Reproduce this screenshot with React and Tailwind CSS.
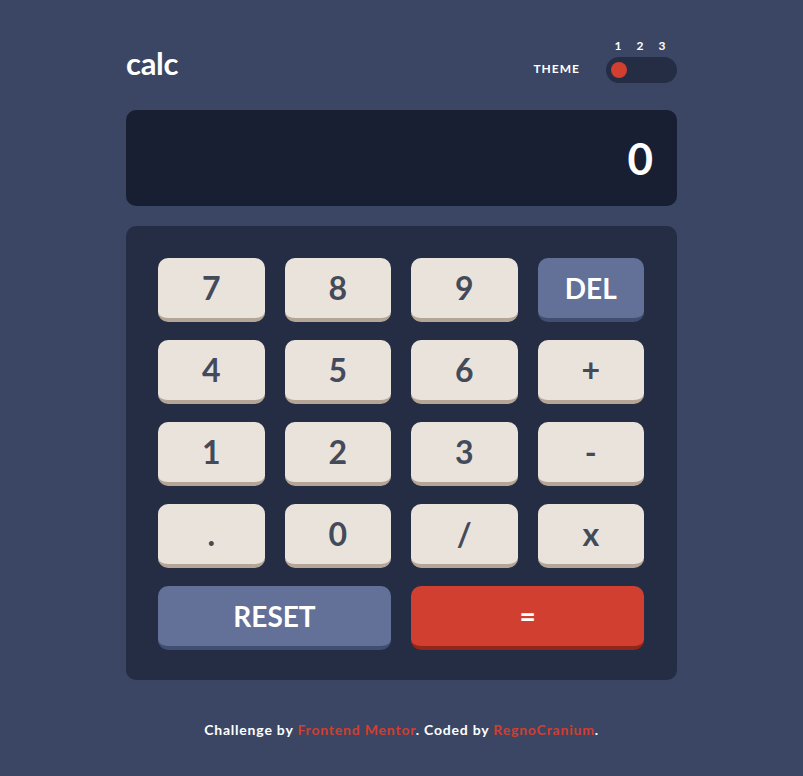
import React, { useState } from 'react';

const keys = [
  { label: '7' }, { label: '8' }, { label: '9' }, { label: 'DEL', kind: 'blue' },
  { label: '4' }, { label: '5' }, { label: '6' }, { label: '+' },
  { label: '1' }, { label: '2' }, { label: '3' }, { label: '-' },
  { label: '.' }, { label: '0' }, { label: '/' }, { label: 'x' },
];

const Key = ({ label, kind, wide, onClick }) => {
  let cls = 'bg-[#eae3dc] border-[#b4a597] text-[#434a59] text-[32px]';
  if (kind === 'blue') cls = 'bg-[#637097] border-[#404e72] text-white text-[28px]';
  if (kind === 'red') cls = 'bg-[#d03f2f] border-[#93261a] text-white text-[28px]';
  return (
    <button
      type="button"
      onClick={onClick}
      className={`${cls} ${wide ? 'col-span-2' : ''} h-[64px] rounded-[10px] border-b-4 flex items-center justify-center font-bold leading-none cursor-pointer`}
    >
      {label}
    </button>
  );
};

export default function App() {
  const [value] = useState('0');

  return (
    <div className="min-h-[776px] bg-[#3a4663] font-['Lato','Liberation_Sans',sans-serif] flex flex-col items-center pt-[38px]">
      <div className="w-[551px]">
        {/* header */}
        <header className="flex justify-between items-end h-[45px]">
          <h1 className="text-white text-[31px] font-bold leading-none pb-[4px] tracking-[-0.3px]">calc</h1>
          <div className="flex items-end gap-[26px]">
            <span className="text-white text-[12px] font-bold tracking-[1px] leading-none mb-[8px]">THEME</span>
            <div className="flex flex-col">
              <div className="grid grid-cols-3 pl-[1px] pr-[4px] text-white text-[12px] font-bold leading-none mb-[5px]">
                <span className="text-center">1</span>
                <span className="text-center">2</span>
                <span className="text-center">3</span>
              </div>
              <div className="w-[71px] h-[26px] rounded-full bg-[#242d44] flex items-center px-[5px]">
                <div className="w-[16px] h-[16px] rounded-full bg-[#d03f2f]" />
              </div>
            </div>
          </div>
        </header>

        {/* display */}
        <div className="mt-[27px] h-[96px] rounded-[10px] bg-[#181f33] flex items-center justify-end px-[24px]">
          <span className="text-white text-[44px] font-bold leading-none">{value}</span>
        </div>

        {/* keypad */}
        <div className="mt-[20px] rounded-[10px] bg-[#242d44] pl-[32px] pr-[33px] pt-[32px] pb-[30px] grid grid-cols-4 gap-x-[20px] gap-y-[18px]">
          {keys.map((k) => (
            <Key key={k.label} label={k.label} kind={k.kind} />
          ))}
          <Key label="RESET" kind="blue" wide />
          <Key label="=" kind="red" wide />
        </div>

        {/* footer */}
        <p className="mt-[42px] text-center text-white text-[14px] font-bold leading-[16px] tracking-[0.8px]">
          Challenge by <a href="#" className="text-[#d03f2f]">Frontend Mentor</a>. Coded by <a href="#" className="text-[#d03f2f]">RegnoCranium</a>.
        </p>
      </div>
    </div>
  );
}
